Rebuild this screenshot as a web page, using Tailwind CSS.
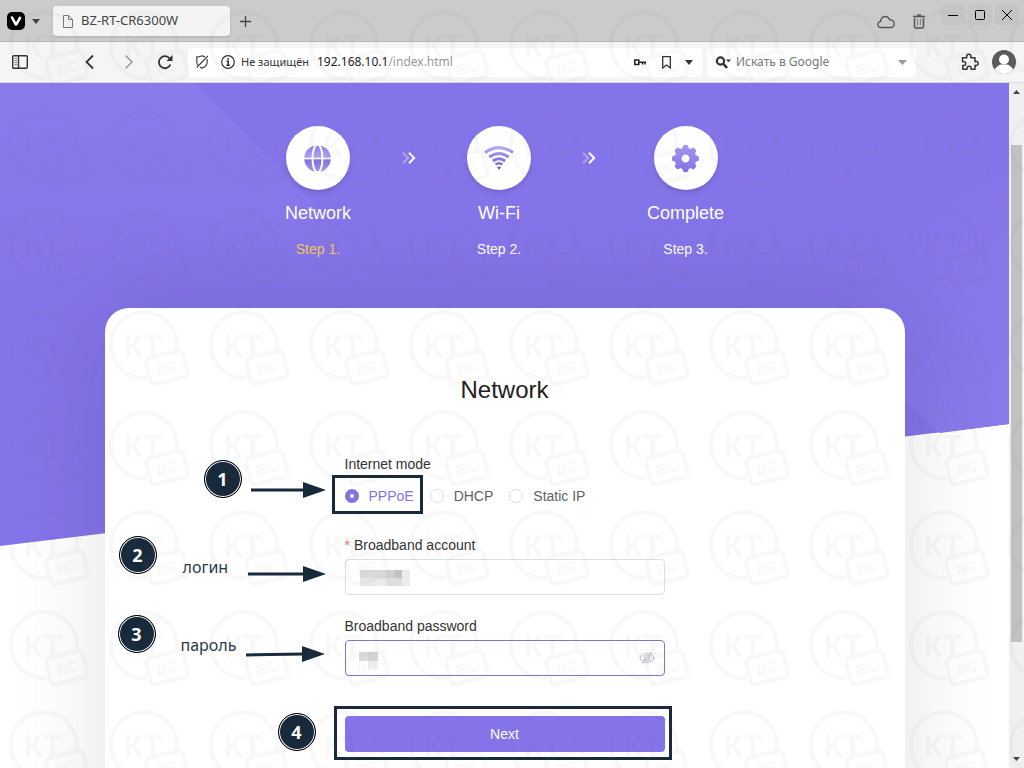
<!DOCTYPE html>
<html lang="ru">

<head>
    <title>BZ-RT-CR6300W</title>
    <meta charset="UTF-8">
    <meta name="viewport" content="width=device-width, initial-scale=1.0">
    <script src="https://cdn.jsdelivr.net/npm/@tailwindcss/browser@4"></script>
</head>

<body class="relative flex h-screen flex-col overflow-hidden bg-white font-['Noto_Sans',sans-serif] text-[#333]">

    <!-- Tab strip -->
    <header class="flex h-[42px] shrink-0 items-start border-b border-[#b2b2b2] bg-[#cbcbcb]">
        <button aria-label="Menu" class="mt-3 ml-[7px] flex items-center gap-[7px]">
            <svg class="size-[18px]" viewBox="0 0 18 18">
                <rect width="18" height="18" rx="5" fill="#000" />
                <path d="M5 5.5 8.6 12.2Q9 12.9 9.4 12.2L13 5.8" fill="none" stroke="#fff" stroke-width="2.6" stroke-linecap="round" />
            </svg>
            <svg class="h-[5px] w-2" viewBox="0 0 8 5"><path d="M0 0h8L4 5z" fill="#444" /></svg>
        </button>
        <div class="mt-[6px] ml-[13px] flex h-[30px] w-[177px] items-center gap-2 rounded bg-[#f4f4f4] pl-[10px] text-[13px] text-[#444] shadow-sm">
            <svg class="h-[13px] w-[10px]" viewBox="0 0 10 13" fill="none" stroke="#777">
                <path d="M.5.5h5l4 4v8h-9zM5.5.5v4h4" />
            </svg>
            <span>BZ-RT-CR6300W</span>
        </div>
        <button aria-label="New tab" class="mt-4 ml-[10px]">
            <svg class="size-[11px]" viewBox="0 0 11 11" stroke="#444" stroke-width="1.3"><path d="M5.5 0v11M0 5.5h11" /></svg>
        </button>
        <div class="mt-[14px] ml-auto flex items-center gap-[17px]">
            <button aria-label="Sync">
                <svg class="h-[14px] w-[18px]" viewBox="0 0 18 14" fill="none" stroke="#555" stroke-width="1.3">
                    <path d="M4 12.5a3 3 0 0 1-.3-6C3.600 3 6 1.500 8.200 1.500c2.300 0 3.700 1.300 4.200 3.200 2.600-.2 4.800 1.400 4.800 4 0 2.300-1.400 3.800-3.500 3.800z" />
                </svg>
            </button>
            <button aria-label="Closed tabs">
                <svg class="h-[15px] w-[14px]" viewBox="0 0 14 15" fill="none" stroke="#555">
                    <path d="M1 2.500h12" stroke-width="1.6" />
                    <path d="M5 1h4" stroke-width="1.5" />
                    <path d="M2.500 4v8.500q0 1.500 1.500 1.500h6q1.500 0 1.500-1.500V4" stroke-width="1.5" />
                    <path d="M5.500 5v6.500M8.500 5v6.500" stroke="#888" stroke-width="1.2" />
                </svg>
            </button>
        </div>
        <div class="mt-[5px] mr-[5px] ml-[15px] flex gap-[3px]">
            <button aria-label="Minimize" class="flex h-5 w-6 items-center justify-center rounded bg-[#c5c5c5]">
                <svg class="size-[10px]" viewBox="0 0 10 10" stroke="#000"><path d="M0 5.500h10" /></svg>
            </button>
            <button aria-label="Maximize" class="flex h-5 w-6 items-center justify-center rounded bg-[#c5c5c5]">
                <svg class="size-[10px]" viewBox="0 0 10 10" stroke="#000" fill="none"><rect x=".5" y=".5" width="9" height="9" rx="1" /></svg>
            </button>
            <button aria-label="Close" class="flex h-5 w-6 items-center justify-center rounded bg-[#c5c5c5]">
                <svg class="size-[10px]" viewBox="0 0 10 10" stroke="#000"><path d="M0 0l10 10M10 0L0 10" /></svg>
            </button>
        </div>
    </header>

    <!-- Address bar -->
    <nav class="flex h-[41px] shrink-0 items-center border-b border-[#dcdcdc] bg-[#f5f5f5] pr-2 pl-3">
        <button aria-label="Panel">
            <svg class="h-[14px] w-4" viewBox="0 0 16 14" fill="none" stroke="#333">
                <rect x=".7" y=".7" width="14.6" height="12.6" rx="1" stroke-width="1.4" />
                <path d="M6.500 1v12" stroke-width="1.4" />
                <path d="M2.500 3.500H5M2.500 5.500H5M2.500 7.500H5M2.500 9.500H5" stroke="#888" />
            </svg>
        </button>
        <div class="ml-[54px] flex items-center gap-[22px]">
            <button aria-label="Back">
                <svg class="size-4" viewBox="0 0 16 16" fill="none" stroke="#333" stroke-width="1.8"><path d="M11 1.500 4.500 8l6.500 6.500" /></svg>
            </button>
            <button aria-label="Forward">
                <svg class="size-4" viewBox="0 0 16 16" fill="none" stroke="#999" stroke-width="1.5"><path d="M5.500 1.500 12 8l-6.500 6.500" /></svg>
            </button>
            <button aria-label="Reload">
                <svg class="size-4" viewBox="1 0 16 16" fill="none" stroke="#333" stroke-width="1.8">
                    <path d="M12.600 4.400A6 6 0 1 0 13.500 10.500" />
                    <path d="M15.500 1v6h-6z" fill="#333" stroke="none" />
                </svg>
            </button>
        </div>
        <div class="ml-[14px] flex h-[29px] flex-1 items-center rounded bg-white pr-[9px] pl-2">
            <svg class="h-[14px] w-3" viewBox="0 0 12 14" fill="none" stroke="#444" stroke-width="1.2">
                <path d="M.7 12.500 11.800 1M9 1.600Q7 1.500 6 .8 4 2 .8 1.800v5q0 2 1 3.300M11.200 4v3q0 4-5.200 6.200-1-.5-2-1.200" />
            </svg>
            <svg class="ml-[13px] size-[14px]" viewBox="0 0 14 14" fill="none" stroke="#333">
                <circle cx="7" cy="7" r="6.300" stroke-width="1.2" />
                <path d="M7 3v1.800M5.500 6.300H7.200V10M5.300 10.300h3.600" stroke-width="1.6" />
            </svg>
            <span class="ml-[6px] text-[11px]">Не защищён</span>
            <span role="textbox" aria-label="Address" class="ml-2 text-[12px] text-[#222]">192.168.10.1<span class="text-[#999]">/index.html</span></span>
            <button aria-label="Passwords" class="ml-auto">
                <svg class="h-[7px] w-3" viewBox="0 0 12 7" fill="none" stroke="#222"><path d="M.8 1h4v4.500h-4zM5 3.200h7M8.500 3v2.500M11 3v2.500" stroke-width="1.5" /></svg>
            </button>
            <button aria-label="Bookmark" class="ml-4">
                <svg class="h-[13px] w-[9px]" viewBox="0 0 9 13" fill="none" stroke="#333" stroke-width="1.3"><path d="M.7.7h7.600v11.300L4.500 9 .7 12z" /></svg>
            </button>
            <button aria-label="History" class="ml-[14px]">
                <svg class="h-[5px] w-2" viewBox="0 0 8 5"><path d="M0 0h8L4 5z" fill="#333" /></svg>
            </button>
        </div>
        <div class="ml-[5px] flex h-[29px] w-[209px] items-center rounded bg-white pr-[9px] pl-2">
            <svg class="h-[13px] w-4 shrink-0" viewBox="0 0 16 13" fill="none" stroke="#333">
                <circle cx="5.500" cy="5" r="3.600" stroke-width="2.2" />
                <path d="M8 7.500 12 12" stroke-width="2.6" />
                <path d="M11 3.500h5l-2.500 2.700z" fill="#333" stroke="none" />
            </svg>
            <input type="search" aria-label="Поиск" placeholder="Искать в Google"
                class="ml-[5px] w-full min-w-0 text-[12px] outline-none placeholder:text-[#777]">
            <svg class="h-[5px] w-[9px] shrink-0" viewBox="0 0 9 5"><path d="M0 0h9L4.500 5z" fill="#999" /></svg>
        </div>
        <button aria-label="Extensions" class="ml-[45px]">
            <svg class="size-[18px]" viewBox="0 0 18 18" fill="none" stroke="#333" stroke-width="1.5" stroke-linejoin="round">
                <path d="M1.500 4.800h4.300Q5 1.200 7.800 1.200T9.800 4.800h4.200v3.900q3.200-.9 3.200 1.700T14 12.200v4h-3.900q.6-3-2-3t-2 3H1.800v-3.800q3 .5 3-1.800t-3.300-1.900z" />
            </svg>
        </button>
        <button aria-label="Profile" class="ml-[13px]">
            <svg class="size-6" viewBox="0 0 24 24">
                <circle cx="12" cy="12" r="12" fill="#5a5a5a" />
                <circle cx="12" cy="9.500" r="5" fill="#fff" />
                <path d="M2.500 19.300Q6 15 9 14.500h6Q18 15 21.500 19.300 18 24 12 24T2.500 19.300z" fill="#fff" />
            </svg>
        </button>
    </nav>

    <div class="flex min-h-0 flex-1 font-['Liberation_Sans',sans-serif]">
        <main class="relative flex-1 overflow-hidden">
            <!-- Slanted backdrop -->
            <svg class="absolute inset-x-0 top-0 h-[463px] w-full" viewBox="0 0 1009 463" preserveAspectRatio="none">
                <defs>
                    <linearGradient id="leftShine" x1="0" y1="0" x2="0" y2="1">
                        <stop offset="0" stop-color="#897beb" />
                        <stop offset="1" stop-color="#8474e9" />
                    </linearGradient>
                    <linearGradient id="rightShine" x1="0" y1="0" x2="1" y2="1">
                        <stop offset=".4" stop-color="#8474e9" />
                        <stop offset="1" stop-color="#897bec" />
                    </linearGradient>
                </defs>
                <path d="M0 0H1009V341L0 463z" fill="#8474e9" />
                <path d="M0 0H195L400 210H0z" fill="url(#leftShine)" />
                <path d="M760 190 1009 90V341L940 350z" fill="url(#rightShine)" />
            </svg>

            <div class="relative">
                <ol class="flex justify-center gap-[51px] pt-[43px] text-center text-white">
                    <li class="flex flex-col items-center">
                        <div class="flex size-16 items-center justify-center rounded-full bg-white shadow-md">
                            <svg class="size-[27px]" viewBox="0 0 27 27">
                                <defs>
                                    <linearGradient id="fade" x1="0" y1="0" x2="0" y2="1">
                                        <stop offset="0" stop-color="#8f80e6" />
                                        <stop offset=".48" stop-color="#aea3f0" />
                                        <stop offset=".52" stop-color="#7f70dc" />
                                        <stop offset="1" stop-color="#a498ee" />
                                    </linearGradient>
                                </defs>
                                <circle cx="13.500" cy="13.500" r="13.300" fill="url(#fade)" />
                                <ellipse cx="13.500" cy="13.500" rx="5" ry="14" fill="none" stroke="#fff" stroke-width="2" />
                                <path d="M0 13.500h27" stroke="#fff" stroke-width="1.6" />
                            </svg>
                        </div>
                        <span class="mt-[11px] text-[18px] leading-6">Network</span>
                        <span class="mt-3 text-[14px] leading-6 text-[#f7c661]">Step 1.</span>
                    </li>
                    <li aria-hidden="true" class="flex h-16 items-center">
                        <svg class="h-3 w-[14px]" viewBox="0 0 14 12" fill="none" stroke="#fff" stroke-width="2">
                            <path d="M1 .8 6.200 6 1 11.200" opacity=".35" />
                            <path d="M7 .8 12.200 6 7 11.200" />
                        </svg>
                    </li>
                    <li class="flex flex-col items-center">
                        <div class="flex size-16 items-center justify-center rounded-full bg-white shadow-md">
                            <svg class="h-6 w-[30px]" viewBox="0 0 30 24" fill="none">
                                <defs>
                                    <linearGradient id="waves" gradientUnits="userSpaceOnUse" x1="0" y1="0" x2="0" y2="24">
                                        <stop offset="0" stop-color="#b9b0f3" />
                                        <stop offset=".5" stop-color="#8b7ce4" />
                                        <stop offset="1" stop-color="#7262c8" />
                                    </linearGradient>
                                </defs>
                                <g stroke="url(#waves)" stroke-width="3">
                                    <path d="M1 6.500Q15-3.300 29 6.500" />
                                    <path d="M5.300 11Q15 4 24.700 11" />
                                    <path d="M8.800 15Q15 10.500 21.200 15" />
                                    <path d="M11.500 18.500Q15 16 18.500 18.500" stroke-width="2.5" />
                                </g>
                                <path d="M13 21.200Q15 19.700 17 21.200L15 24z" fill="#6b5bc4" />
                            </svg>
                        </div>
                        <span class="mt-[11px] text-[18px] leading-6">Wi-Fi</span>
                        <span class="mt-3 text-[14px] leading-6">Step 2.</span>
                    </li>
                    <li aria-hidden="true" class="flex h-16 items-center">
                        <svg class="h-3 w-[14px]" viewBox="0 0 14 12" fill="none" stroke="#fff" stroke-width="2">
                            <path d="M1 .8 6.200 6 1 11.200" opacity=".35" />
                            <path d="M7 .8 12.200 6 7 11.200" />
                        </svg>
                    </li>
                    <li class="flex flex-col items-center">
                        <div class="flex size-16 items-center justify-center rounded-full bg-white shadow-md">
                            <svg class="size-[27px]" viewBox="-13.5 -13.5 27 27">
                                <defs>
                                    <linearGradient id="gear" gradientUnits="userSpaceOnUse" x1="0" y1="-13" x2="0" y2="13">
                                        <stop offset="0" stop-color="#a397ee" />
                                        <stop offset="1" stop-color="#8272e6" />
                                    </linearGradient>
                                </defs>
                                <g fill="url(#gear)">
                                    <circle r="7.400" fill="none" stroke="url(#gear)" stroke-width="6.800" />
                                    <path d="M-3.500-10 -2-13.400H2L3.500-10zM-3.500 10 -2 13.400H2L3.500 10zM-10-3.500 -13.400-2V2L-10 3.500zM10-3.500 13.400-2V2L10 3.500z" />
                                    <path d="M4.600-9.500 8.100-10.900 10.900-8.100 9.500-4.600zM4.600 9.500 8.100 10.900 10.900 8.100 9.500 4.600zM-4.600-9.500-8.100-10.900-10.900-8.100-9.500-4.600zM-4.600 9.500-8.100 10.900-10.900 8.100-9.500 4.600z" />
                                </g>
                            </svg>
                        </div>
                        <span class="mt-[11px] text-[18px] leading-6">Complete</span>
                        <span class="mt-3 text-[14px] leading-6">Step 3.</span>
                    </li>
                </ol>

                <section class="relative mx-auto mt-[47px] h-[600px] max-w-[800px] rounded-3xl bg-white pt-[66px] shadow-[0_0_100px_rgba(0,0,0,0.11)]">
                    <h1 class="text-center text-[24px] leading-8 text-[#222]">Network</h1>

                    <form class="mx-auto mt-12 flex w-[320px] flex-col text-[14px] leading-5">
                        <fieldset>
                            <legend>Internet mode</legend>
                            <div class="mt-3 flex gap-4 text-[#606266]">
                                <label class="flex items-center gap-[10px] text-[#8573e6]">
                                    <input type="radio" name="mode" checked class="size-[14px] appearance-none rounded-full border border-[#dcdfe6] checked:border-5 checked:border-[#8573e6]">
                                    PPPoE
                                </label>
                                <label class="flex items-center gap-[10px]">
                                    <input type="radio" name="mode" class="size-[14px] appearance-none rounded-full border border-[#dcdfe6] checked:border-5 checked:border-[#8573e6]">
                                    DHCP
                                </label>
                                <label class="flex items-center gap-[10px]">
                                    <input type="radio" name="mode" class="size-[14px] appearance-none rounded-full border border-[#dcdfe6] checked:border-5 checked:border-[#8573e6]">
                                    Static IP
                                </label>
                            </div>
                        </fieldset>

                        <label for="account" class="mt-[29px]"><span class="mr-1 text-[#f56c6c]">*</span>Broadband account</label>
                        <div class="relative mt-1">
                            <input id="account" type="text" class="h-9 w-full rounded border border-[#dcdfe6] px-[14px] outline-none">
                            <svg class="absolute top-[10px] left-[15px] h-[18px] w-[50px]" viewBox="0 0 50 18">
                                <path d="M0 1h50v16H0z" fill="#ececec" />
                                <path d="M0 1h26v8H0z" fill="#d9d9d9" />
                                <path d="M26 1h8v8h-8z" fill="#d2d2d2" />
                                <path d="M34 1h8v8h-8z" fill="#c2c2c2" />
                                <path d="M0 9h17v8H0z" fill="#e8e8e8" />
                                <path d="M26 9h16v8H26z" fill="#dedede" />
                            </svg>
                        </div>

                        <label for="password" class="mt-[21px]">Broadband password</label>
                        <div class="relative mt-1">
                            <input id="password" type="password" class="h-9 w-full rounded border border-[#8573c8] px-[14px] outline-none">
                            <svg class="absolute top-3 left-[14px] h-[18px] w-[19px]" viewBox="0 0 19 18">
                                <path d="M0 0h19v9H0z" fill="#d3d3d5" />
                                <path d="M0 0h9v9H0z" fill="#dcdcdd" />
                                <path d="M9 9h10v8H9z" fill="#efefef" />
                            </svg>
                            <button type="button" aria-label="Show password" class="absolute top-3 right-[10px]">
                                <svg class="h-3 w-4" viewBox="0 0 16 12" fill="none" stroke="#c0c4cc" stroke-width="1.2">
                                    <path d="M.8 6Q3.500 1.500 8 1.500T15.200 6Q12.500 10.500 8 10.500T.8 6z" />
                                    <circle cx="8" cy="6" r="2.700" />
                                    <path d="M3 11.500 13 .5" />
                                </svg>
                            </button>
                        </div>

                        <button type="button" class="mt-10 h-9 rounded bg-[#8573e9] text-white">Next</button>
                    </form>

                    <!-- Callouts drawn over the form -->
                    <div class="absolute top-[167px] left-[227px] h-[39px] w-[91px] border-3 border-[#17293b]"></div>
                    <div class="absolute top-[398px] left-[229px] h-[54px] w-[338px] border-3 border-[#17293b]"></div>
                    <svg class="absolute top-0 left-0 h-[400px] w-[240px]" viewBox="0 0 240 400" stroke="#17293b" fill="#17293b" stroke-width="3">
                        <path d="M146 182h54" />
                        <path d="M198 174v16l23-8z" stroke="none" />
                        <path d="M143 266h56" />
                        <path d="M198 258v16l23-8z" stroke="none" />
                        <path d="M141 347l58-1" />
                        <path d="M197 338v16l23-8z" stroke="none" />
                    </svg>
                    <div class="absolute top-[152px] left-[99px] flex size-[38px] items-center justify-center rounded-full border border-black bg-[#17293b] font-['Noto_Sans',sans-serif] text-[18px] font-bold text-white inset-ring inset-ring-white">1</div>
                    <div class="absolute top-[228px] left-[14px] flex size-[38px] items-center justify-center rounded-full border border-black bg-[#17293b] font-['Noto_Sans',sans-serif] text-[18px] font-bold text-white inset-ring inset-ring-white">2</div>
                    <div class="absolute top-[307px] left-[13px] flex size-[38px] items-center justify-center rounded-full border border-black bg-[#17293b] font-['Noto_Sans',sans-serif] text-[18px] font-bold text-white inset-ring inset-ring-white">3</div>
                    <div class="absolute top-[405px] left-[173px] flex size-[38px] items-center justify-center rounded-full border border-black bg-[#17293b] font-['Noto_Sans',sans-serif] text-[18px] font-bold text-white inset-ring inset-ring-white">4</div>
                    <span class="absolute top-[247px] left-[78px] font-['Noto_Sans',sans-serif] text-[16px] leading-6 text-[#2b3b4b]">логин</span>
                    <span class="absolute top-[325px] left-[76px] font-['Noto_Sans',sans-serif] text-[16px] leading-6 text-[#2b3b4b]">пароль</span>
                </section>
            </div>
        </main>

        <!-- Scrollbar -->
        <aside class="flex w-[15px] shrink-0 flex-col items-center bg-[#f0f0f0]">
            <svg class="mt-[7px] h-1 w-[7px]" viewBox="0 0 7 4"><path d="M0 4h7L3.500 0z" fill="#444" /></svg>
            <div class="grow-[51]"></div>
            <div class="w-[11px] grow-[497] bg-[#c1c1c1]"></div>
            <div class="grow-[115]"></div>
            <svg class="mb-[7px] h-1 w-[7px]" viewBox="0 0 7 4"><path d="M0 0h7L3.500 4z" fill="#444" /></svg>
        </aside>
    </div>

    <!-- Repeating watermark -->
    <svg class="pointer-events-none absolute inset-0 size-full" aria-hidden="true">
        <defs>
            <pattern id="mark" width="100" height="100" patternUnits="userSpaceOnUse">
                <path d="M76.500 50A33 33 0 1 0 47 78" fill="none" stroke="#666" stroke-width="4" />
                <text x="43" y="57" text-anchor="middle" font-size="31" font-weight="bold" fill="#666" class="font-['Liberation_Sans',sans-serif]">КТ</text>
                <g transform="rotate(-14 67 68)">
                    <rect x="48" y="54" width="38" height="27" rx="5" fill="none" stroke="#666" stroke-width="4" />
                    <text x="67" y="73" text-anchor="middle" font-size="15" font-weight="bold" fill="#666" class="font-['Liberation_Sans',sans-serif]">ВС</text>
                </g>
            </pattern>
        </defs>
        <rect width="100%" height="100%" fill="url(#mark)" opacity=".045" />
    </svg>
</body>

</html>
